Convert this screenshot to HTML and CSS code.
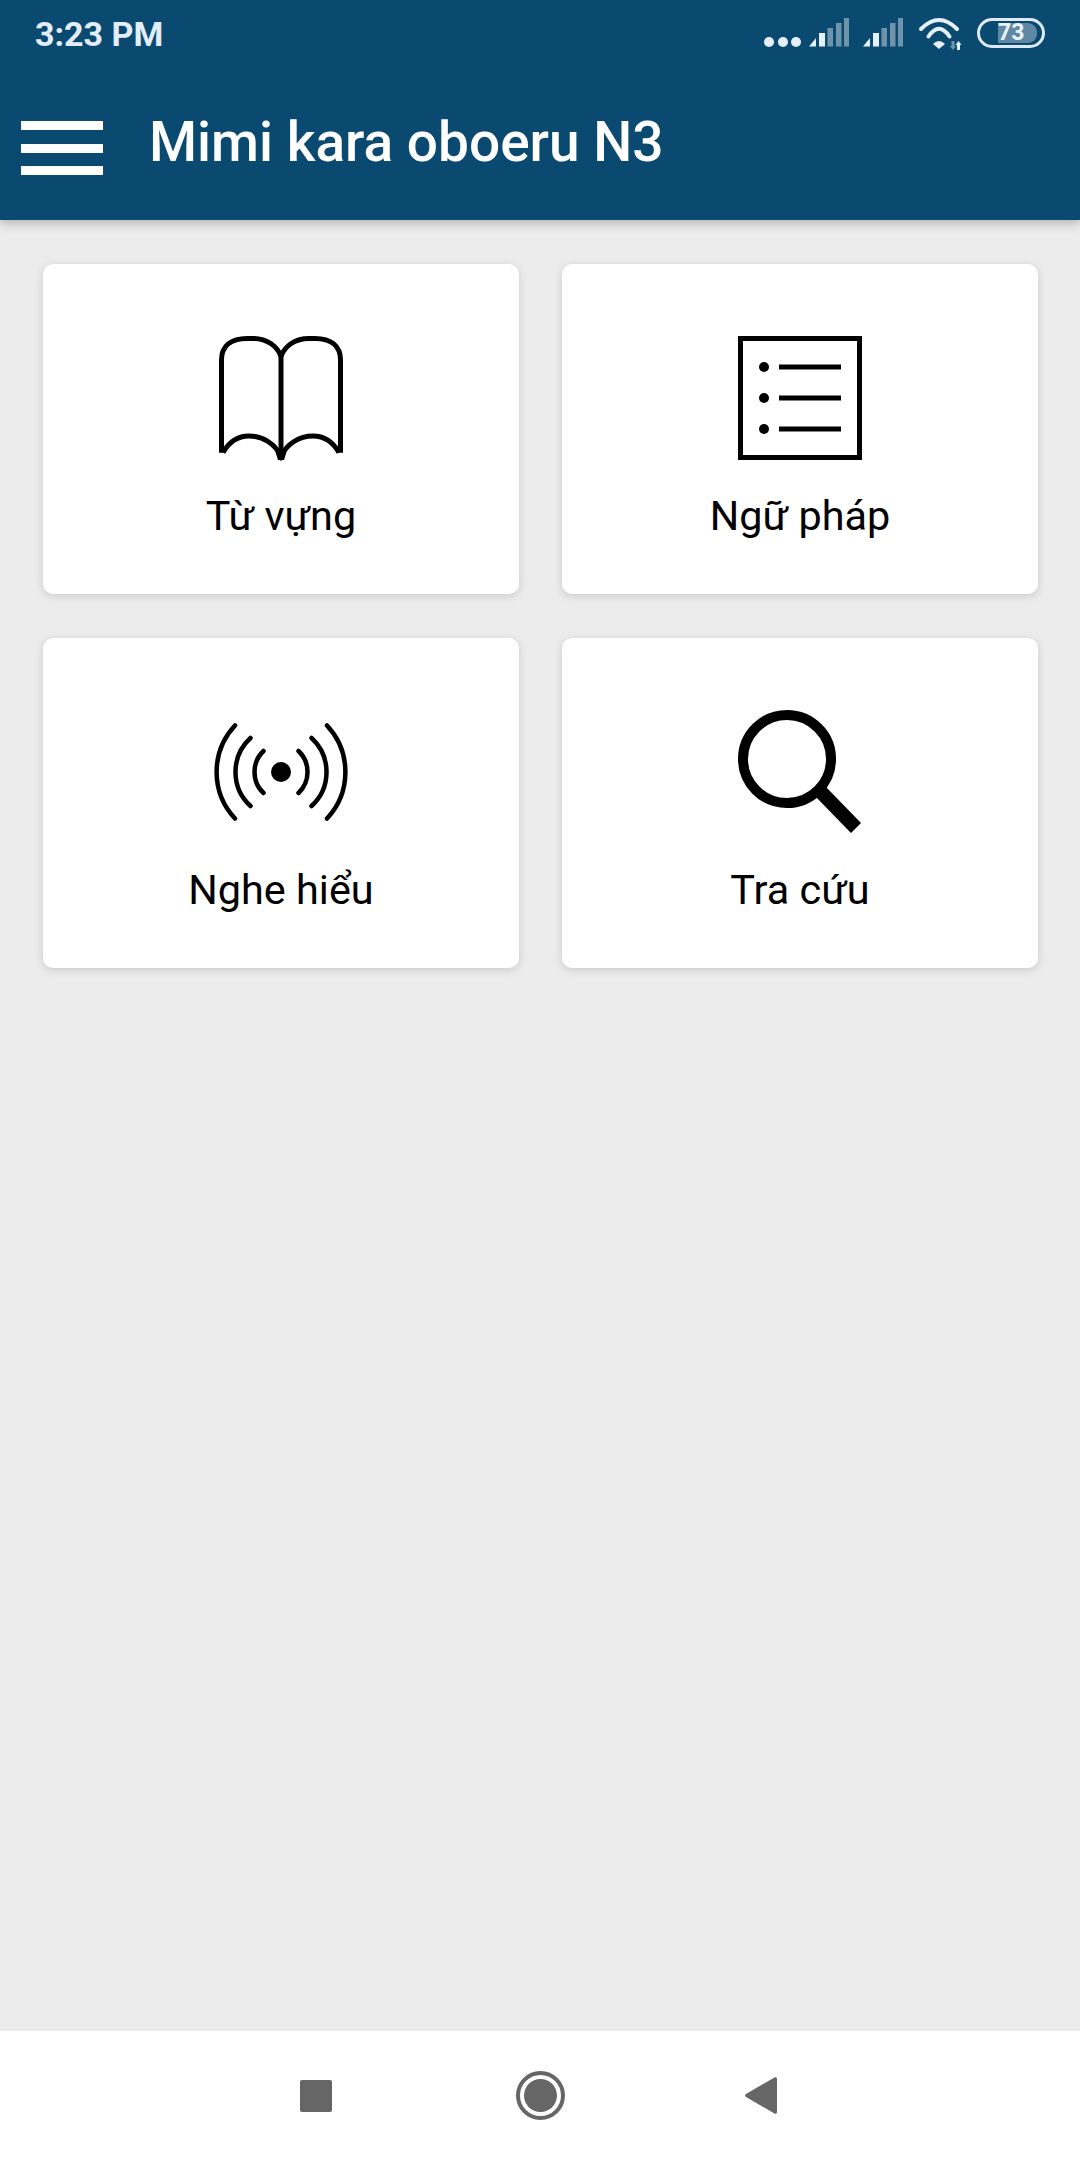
FILE: index.html
```html
<!DOCTYPE html>
<html lang="vi">
<head>
<meta charset="utf-8">
<title>Mimi kara oboeru N3</title>
<link rel="stylesheet" href="styles.css">
</head>
<body>
<div class="screen">
  <header class="appbar">
    <div class="statusbar">
      <span class="clock">3:23 PM</span>
      <div class="status-icons">
        <div class="dots"><i></i><i></i><i></i></div>
        <svg class="signal" width="40" height="30" viewBox="0 0 40 30"><path class="on" d="M0 28.5 7 20v8.5z"/><rect class="on" x="10" y="15" width="6" height="13.500"/><rect class="off" x="18.500" y="10" width="5.500" height="18.500"/><rect class="off" x="27" y="5" width="5.500" height="23.500"/><rect class="off" x="35" y="0" width="5" height="28.500"/></svg>
        <svg class="signal" width="40" height="30" viewBox="0 0 40 30"><path class="on" d="M0 28.5 7 20v8.5z"/><rect class="on" x="10" y="15" width="6" height="13.500"/><rect class="off" x="18.500" y="10" width="5.500" height="18.500"/><rect class="off" x="27" y="5" width="5.500" height="23.500"/><rect class="off" x="35" y="0" width="5" height="28.500"/></svg>
        <svg class="wifi" width="43" height="32" viewBox="0 0 43 32"><path class="wave" d="M2 11Q20-7 38 11"/><path class="wave" d="M9.500 18.500Q20 3 30.500 18.500"/><path class="on" d="M14 26Q20 20 26 26L20 31z"/><path class="off" d="M32.500 23h3v5h1.500l-3 4-3-4h1.500z"/><path class="on" d="M38 32v-5h-1.500l3-4 3 4H41v5z"/></svg>
        <div class="battery"><span class="battery-level">73</span></div>
      </div>
    </div>
    <div class="toolbar">
      <div class="menu"><i></i><i></i><i></i></div>
      <h1 class="title">Mimi kara oboeru N3</h1>
    </div>
  </header>

  <main class="grid">
    <a class="card">
      <svg class="icon" viewBox="0 0 124 124"><path class="line" d="M2.500 116.700V24C2.500 10 12 2.500 28 2.500h6C48 2.500 58 10 62 20 66 10 76 2.500 90 2.500h6c16 0 25.500 7.500 25.500 21.500v92.700"/><path class="line" d="M4 116.500C10 106 18 100 30 100c14 0 26 8 32 20 6-12 18-20 32-20 12 0 20 6 26 16.500"/><path class="line" d="M62 20v100"/><path d="M56.500 116h11l-2.500 8h-6z"/></svg>
      <span class="label">Từ vựng</span>
    </a>
    <a class="card">
      <svg class="icon" viewBox="0 0 124 124"><rect class="line box" x="2.500" y="2.500" width="119" height="119"/><circle cx="26" cy="31" r="5"/><circle cx="26" cy="62" r="5"/><circle cx="26" cy="93" r="5"/><path class="line" d="M41 31h62M41 62h62M41 93h62"/></svg>
      <span class="label">Ngữ pháp</span>
    </a>
    <a class="card">
      <svg class="icon" viewBox="0 0 124 124"><circle cx="62" cy="62" r="10"/><path class="line round" d="M16 15.500A68 68 0 0 0 16 108.500M108 15.500A68 68 0 0 1 108 108.500M31.500 28A46 46 0 0 0 31.500 96M92.500 28A46 46 0 0 1 92.500 96M44.500 41A29 29 0 0 0 44.500 83M79.500 41A29 29 0 0 1 79.500 83"/></svg>
      <span class="label">Nghe hiểu</span>
    </a>
    <a class="card">
      <svg class="icon" viewBox="0 0 124 124"><circle class="lens" cx="49" cy="49" r="44"/><path class="handle" d="M82 81 118 118"/></svg>
      <span class="label">Tra cứu</span>
    </a>
  </main>

  <nav class="navbar">
    <span class="nav-square"></span>
    <span class="nav-home"><i></i></span>
    <svg class="nav-back" width="32" height="37" viewBox="0 0 32 37"><path d="M32 2v33c0 1.500-1.300 2.300-2.500 1.600L1 20c-1.300-.8-1.300-2.200 0-3L29.500.5C30.700-.2 32 .5 32 2z"/></svg>
  </nav>
</div>
</body>
</html>
```
FILE: styles.css
```css
* { box-sizing: border-box; }
html, body { margin: 0; padding: 0; }
body { font-family: Roboto, "Noto Sans", sans-serif; background: #ececec; }

.screen { width: 1080px; height: 2160px; display: flex; flex-direction: column; overflow: hidden; background: #ececec; }

.appbar { height: 220px; flex: none; background: #0b4a70; box-shadow: 0 3px 10px rgba(0,0,0,.26); position: relative; }

.statusbar { height: 60px; display: flex; align-items: flex-start; justify-content: space-between; padding: 18px 35px 0 35px; }
.clock { font-size: 34px; line-height: 33px; font-weight: 700; color: #e3eefa; }
.status-icons { display: flex; align-items: flex-start; }
.dots { display: flex; gap: 3.500px; margin: 19px 8px 0 0; }
.dots i { width: 10px; height: 10px; border-radius: 50%; background: #e6f0fa; display: block; }
.signal { margin-right: 14px; display: block; }
.wifi { margin: 0 15px 0 2px; display: block; overflow: visible; }
.on { fill: #e6f0fa; }
.off { fill: #6f93ab; }
.wave { fill: none; stroke: #e6f0fa; stroke-width: 4; stroke-linecap: round; }
.battery { width: 68px; height: 30px; border: 3px solid #dfeaf5; border-radius: 15px; padding: 2px 5px 2px 18px; display: flex; }
.battery-level { flex: 1; background: #5f88a5; border-radius: 0 9px 9px 0; font-size: 23px; line-height: 20px; font-weight: 700; color: #e9f1f9; }

.toolbar { height: 160px; display: flex; align-items: center; }
.menu { width: 82px; margin-left: 21px; display: flex; flex-direction: column; gap: 13.500px; padding-top: 16px; }
.menu i { height: 9px; display: block; background: #fff; }
.title { margin: 4px 0 0 46px; font-size: 55px; line-height: 66px; font-weight: 500; color: #fff; white-space: nowrap; }

.grid { flex: 1; display: grid; grid-template-columns: 476px 476px; grid-auto-rows: 330px; column-gap: 43px; row-gap: 44px; padding: 44px 42px 0 43px; align-content: start; }
.card { background: #fff; border-radius: 10px; box-shadow: 0 2px 8px rgba(0,0,0,.15); display: flex; flex-direction: column; align-items: center; padding-top: 72px; }
.icon { width: 124px; height: 124px; display: block; overflow: visible; flex: none; }
.line { fill: none; stroke: #000; stroke-width: 5; }
.box { stroke-width: 5; }
.round { stroke-linecap: round; stroke-width: 4.500; }
.lens { fill: none; stroke: #000; stroke-width: 10; }
.handle { fill: none; stroke: #000; stroke-width: 14; }
.label { margin-top: 33px; font-size: 41.400px; line-height: 47px; color: #000; }

.navbar { height: 129px; flex: none; background: #fff; display: flex; align-items: center; justify-content: center; padding-right: 4px; }
.nav-square { width: 32px; height: 32px; border-radius: 2px; background: #666; display: block; }
.nav-home { width: 49px; height: 49px; margin: 0 180px 0 184px; border: 4px solid #666; border-radius: 50%; display: flex; align-items: center; justify-content: center; }
.nav-home i { width: 33px; height: 33px; border-radius: 50%; background: #666; display: block; }
.nav-back { display: block; fill: #666; }
```
